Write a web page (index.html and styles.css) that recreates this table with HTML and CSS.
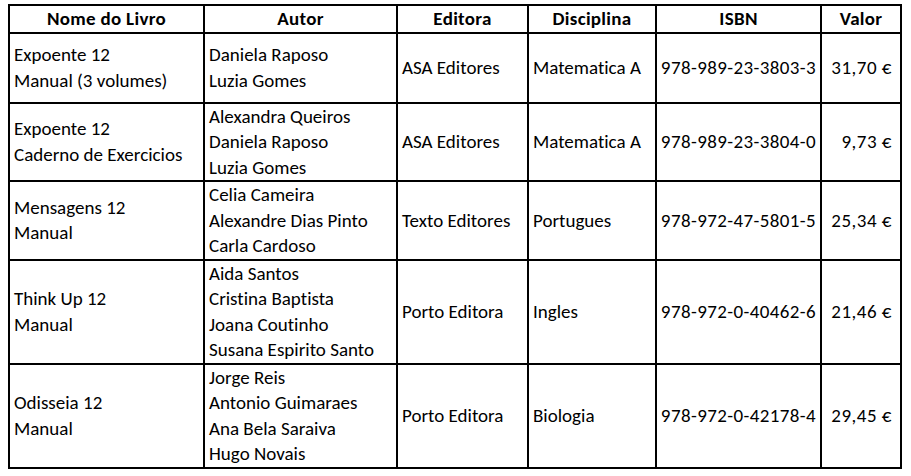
FILE: index.html
```html
<!DOCTYPE html>
<html lang="pt">
<head>
<meta charset="utf-8">
<title>Livros</title>
<link rel="stylesheet" href="styles.css">
</head>
<body>
<table class="books">
  <colgroup>
    <col class="c-nome"><col class="c-autor"><col class="c-editora"><col class="c-disc"><col class="c-isbn"><col class="c-valor">
  </colgroup>
  <thead>
    <tr class="r-head">
      <th>Nome do Livro</th><th>Autor</th><th>Editora</th><th>Disciplina</th><th>ISBN</th><th>Valor</th>
    </tr>
  </thead>
  <tbody>
    <tr class="r-1">
      <td>Expoente 12<br>Manual (3 volumes)</td>
      <td>Daniela Raposo<br>Luzia Gomes</td>
      <td>ASA Editores</td>
      <td>Matematica A</td>
      <td class="isbn">978-989-23-3803-3</td>
      <td class="valor">31,70 €</td>
    </tr>
    <tr class="r-3">
      <td>Expoente 12<br>Caderno de Exercicios</td>
      <td>Alexandra Queiros<br>Daniela Raposo<br>Luzia Gomes</td>
      <td>ASA Editores</td>
      <td>Matematica A</td>
      <td class="isbn">978-989-23-3804-0</td>
      <td class="valor">9,73 €</td>
    </tr>
    <tr class="r-3">
      <td>Mensagens 12<br>Manual</td>
      <td>Celia Cameira<br>Alexandre Dias Pinto<br>Carla Cardoso</td>
      <td>Texto Editores</td>
      <td>Portugues</td>
      <td class="isbn">978-972-47-5801-5</td>
      <td class="valor">25,34 €</td>
    </tr>
    <tr class="r-4">
      <td>Think Up 12<br>Manual</td>
      <td>Aida Santos<br>Cristina Baptista<br>Joana Coutinho<br>Susana Espirito Santo</td>
      <td>Porto Editora</td>
      <td>Ingles</td>
      <td class="isbn">978-972-0-40462-6</td>
      <td class="valor">21,46 €</td>
    </tr>
    <tr class="r-4">
      <td>Odisseia 12<br>Manual</td>
      <td>Jorge Reis<br>Antonio Guimaraes<br>Ana Bela Saraiva<br>Hugo Novais</td>
      <td>Porto Editora</td>
      <td>Biologia</td>
      <td class="isbn">978-972-0-42178-4</td>
      <td class="valor">29,45 €</td>
    </tr>
  </tbody>
</table>
</body>
</html>
```
FILE: styles.css
```css
html, body {
  margin: 0;
  background: #ffffff;
}
body {
  padding: 4px 0 0 8px;
  font-family: Carlito, Lato, "Liberation Sans", sans-serif;
  font-size: 19px;
  font-variant-ligatures: none;
  color: #000;
}
.books {
  border-collapse: collapse;
  table-layout: fixed;
  width: 894px;
}
.books th, .books td {
  border: 2px solid #000;
  padding: 0 4px;
  line-height: 25.5px;
  vertical-align: middle;
  text-align: left;
  white-space: nowrap;
  overflow: hidden;
}
.books th {
  font-weight: bold;
  text-align: center;
  letter-spacing: 0.3px;
}
.c-nome { width: 195px; }
.c-autor { width: 193px; }
.c-editora { width: 131px; }
.c-disc { width: 128px; }
.c-isbn { width: 165px; }
.c-valor { width: 80px; }
.r-head { height: 24px; }
.r-1 { height: 70px; }
.r-3 { height: 77px; }
.r-4 { height: 103px; }
.books td.isbn { text-align: center; padding: 0 1px; letter-spacing: 0.4px; }
.books td.valor { text-align: right; padding-right: 8px; letter-spacing: 0.5px; }
```
